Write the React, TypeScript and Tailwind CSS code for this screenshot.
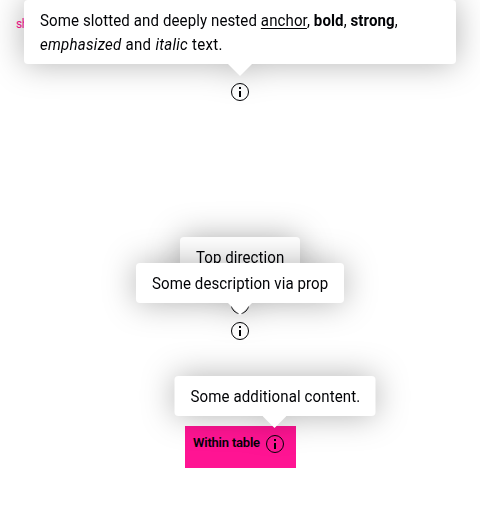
import type { ReactNode } from "react";

function InfoIcon() {
  return (
    <svg viewBox="0 0 24 24" className="block h-6 w-6" fill="none">
      <circle cx="12" cy="12" r="8.5" stroke="#010205" strokeWidth="1" />
      <path d="M11 7h2v2h-2zM11 11h2v6h-2z" fill="#010205" />
    </svg>
  );
}

function Popover({ box, children }: { box: string; children: ReactNode }) {
  return (
    <div className="relative h-6 w-6 shrink-0">
      <InfoIcon />
      <div className="absolute bottom-7 left-1/2 flex -translate-x-1/2 flex-col items-center drop-shadow-[0_0_16px_rgba(0,0,0,0.3)]">
        <div className={`rounded bg-white px-4 pt-[9px] pb-[7px] text-base leading-6 whitespace-nowrap ${box}`}>
          <div className="origin-left scale-x-94">{children}</div>
        </div>
        <svg viewBox="0 0 24 12" className="block h-3 w-6" fill="#fff">
          <path d="M0 0h24L12 12z" />
        </svg>
      </div>
    </div>
  );
}

export default function App() {
  return (
    <div className="relative flex h-[532px] w-[480px] flex-col items-center overflow-hidden bg-white font-['Roboto','Liberation_Sans',sans-serif] text-[#010205]">
      <div className="h-20 w-full pt-4 pl-4 text-xs leading-4 tracking-[-0.5px] text-[#ff1493]">sh</div>
      <Popover box="h-16 w-[432px]">
        <p className="tracking-[0.11px]">
          Some slotted and deeply nested <a className="underline underline-offset-2">anchor</a>, <b>bold</b>, <strong>strong</strong>,
        </p>
        <p className="tracking-[0.29px]">
          <em>emphasized</em> and <i>italic</i> text.
        </p>
      </Popover>
      <div className="mt-[189px]">
        <Popover box="h-10 w-[120px] tracking-[0.07px]">Top direction</Popover>
      </div>
      <div className="mt-0.5">
        <Popover box="h-10 w-[208px] tracking-[0.09px]">Some description via prop</Popover>
      </div>
      <div className="mt-[83px] flex h-[42px] w-[111px] bg-[#ff1493] pt-1.5 pl-2">
        <span className="mt-px w-[70px] pl-[0.5px] text-[13px] leading-5 font-semibold tracking-[-0.2px] whitespace-nowrap">Within table</span>
        <Popover box="h-10 w-[201px] pl-[16.5px] tracking-[0.12px]">Some additional content.</Popover>
      </div>
    </div>
  );
}
